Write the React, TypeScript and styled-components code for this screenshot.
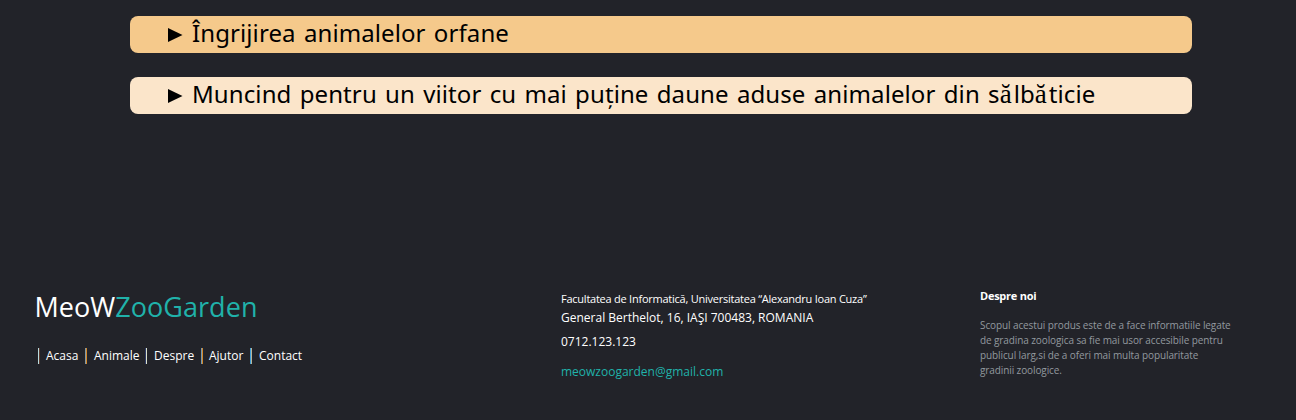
import React from "react";
import styled, { createGlobalStyle } from "styled-components";

const Global = createGlobalStyle`
  * { box-sizing: border-box; }
  body { margin: 0; background: #222329; font-family: "Open Sans", sans-serif; overflow: hidden; }
`;
const Page = styled.div`height: 420px; display: flex; flex-direction: column; background: #222329;`;
const Topics = styled.main`padding: 16px 104px 0 130px; display: flex; flex-direction: column; gap: 24px; height: 285px;`;
const Topic = styled.div<{ $tone: string }>`
  display: flex; align-items: center; height: 37px; padding: 0 0 3px 37px; border-radius: 8px;
  background: ${(p) => p.$tone}; color: #000; font: 24px/34px "Noto Sans", sans-serif; white-space: nowrap;
`;
const Marker = styled.svg`width: 16px; height: 14px; margin: 4px 9px 0 0;`;
const TopicText = styled.span`margin-top: -1px; letter-spacing: 0.1px; word-spacing: 1.9px;`;
const Breve = styled.span`font-family: "Liberation Serif", serif; font-size: 27px; line-height: 1; letter-spacing: 2px;`;
const Footer = styled.footer`
  display: grid; grid-template-columns: 526px 419px 1fr; padding: 0 35px; color: #fff; white-space: nowrap;
`;
const Brand = styled.h3`margin: 3px 0 0 -0.5px; font-size: 27px; line-height: 37px; font-weight: 400; letter-spacing: 0.04px; span { color: #20b2aa; }`;
const Links = styled.nav`display: flex; margin-top: 21px; padding-left: 3px; font-size: 12px; line-height: 20px;`;
const Link = styled.a<{ $left: string; $right: string; $w: number; $gap: number }>`
  display: flex; align-items: center; width: ${(p) => p.$w}px;
  &::before {
    content: ""; width: 2px; height: 16px; margin-right: ${(p) => p.$gap}px;
    background: linear-gradient(to right, ${(p) => p.$left} 50%, ${(p) => p.$right} 50%);
  }
`;
const Address = styled.div`font-size: 12px; line-height: 18px; padding-top: 5px;`;
const Line = styled.div<{ $size?: number; $top?: number; $color?: string; $spacing?: number }>`
  font-size: ${(p) => p.$size ?? 12}px; margin-top: ${(p) => p.$top ?? 0}px; color: ${(p) => p.$color ?? "#fff"};
  letter-spacing: ${(p) => p.$spacing ?? 0}px;
`;
const About = styled.div`padding-top: 3px; font-size: 10px; line-height: 15px; color: #92999f; letter-spacing: -0.1px;`;
const Heading = styled.div`font-size: 11px; line-height: 16px; font-weight: 700; color: #fff; margin-bottom: 14px; letter-spacing: -0.25px;`;

const Arrow = () => <Marker viewBox="0 0 16 14"><path d="M1 0L15.5 7L1 14Z" fill="#000" /></Marker>;

export default function App() {
  return (
    <Page>
      <Global />
      <Topics>
        <Topic $tone="#f5c98b"><Arrow /><TopicText>Îngrijirea animalelor orfane</TopicText></Topic>
        <Topic $tone="#fbe5ca"><Arrow /><TopicText>Muncind pentru un viitor cu mai puține daune aduse animalelor din s<Breve>ă</Breve>lb<Breve>ă</Breve>ticie</TopicText></Topic>
      </Topics>
      <Footer>
        <div>
          <Brand>MeoW<span>ZooGarden</span></Brand>
          <Links>
            <Link $left="#b9dcdf" $right="#5c3a2f" $w={47} $gap={6}>Acasa</Link>
            <Link $left="#8299a5" $right="#d4882b" $w={60} $gap={7}>Animale</Link>
            <Link $left="#303c68" $right="#dce2cd" $w={56} $gap={7}>Despre</Link>
            <Link $left="#7599ad" $right="#d4882b" $w={49} $gap={6}>Ajutor</Link>
            <Link $left="#3f9fd8" $right="#b9b497" $w={60} $gap={7}>Contact</Link>
          </Links>
        </div>
        <Address>
          <Line $size={11} $spacing={-0.24}>Facultatea de Informatică, Universitatea “Alexandru Ioan Cuza”</Line>
          <Line $top={1}>General Berthelot, 16, IAŞI 700483, ROMANIA</Line>
          <Line $top={6}>0712.123.123</Line>
          <Line $top={12} $color="#20b2aa">meowzoogarden@gmail.com</Line>
        </Address>
        <About>
          <Heading>Despre noi</Heading>
          Scopul acestui produs este de a face informatiile legate<br />
          de gradina zoologica sa fie mai usor accesibile pentru<br />
          publicul larg,si de a oferi mai multa popularitate<br />
          gradinii zoologice.
        </About>
      </Footer>
    </Page>
  );
}
